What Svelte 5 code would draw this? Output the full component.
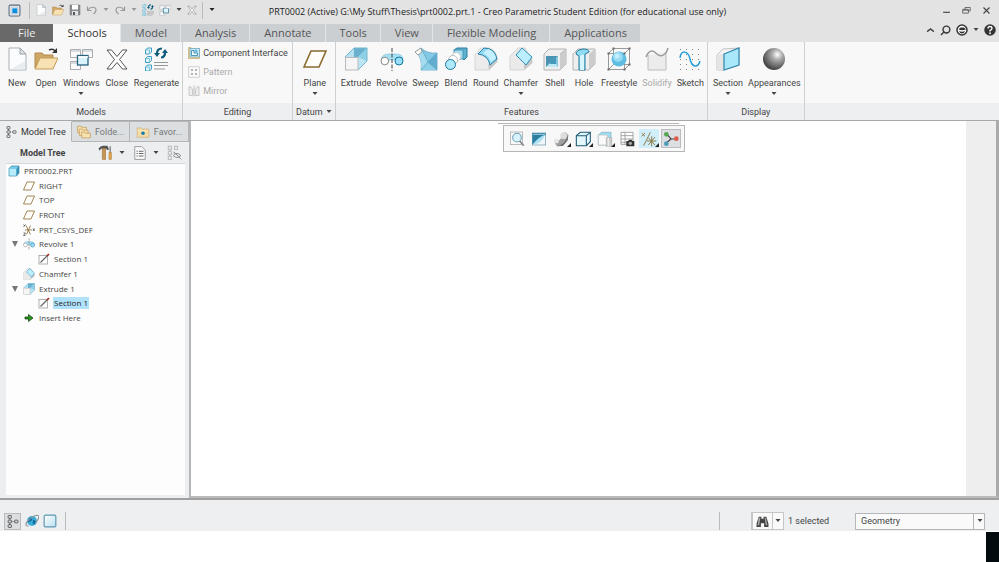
<script>
  const icons = {
    app: `<rect x="2" y="2" width="20" height="20" rx="2" fill="#fff" stroke="#54687a" stroke-width="2"/><rect x="5.5" y="5.5" width="13" height="13" fill="#e8f3fa" stroke="#8896a2"/><rect x="8" y="8" width="9" height="9" fill="#0a8fdc"/>`,
    doc: `<path d="M4 1h11l6 6v16H4z" fill="#fbfcfd" stroke="#aab0b6"/><path d="M15 1v6h6z" fill="#dde1e5" stroke="#9aa2a9"/><path d="M5 22.500h15V14z" fill="#e9edf1"/>`,
    open: `<path d="M1 21V6h7l2 2h9v4H7z" fill="#cfa768" stroke="#b18a4a"/><path d="M1 22l5-11h18l-5 11z" fill="#f8e2b4" stroke="#c39b58"/><path d="M15 3q4-2 6 1" fill="none" stroke="#333" stroke-width="1.500"/><path d="M23 1v5h-5z" fill="#333"/>`,
    save: `<path d="M2 2h20v20H2z" fill="#8a8c8f" stroke="#707275"/><path d="M6 2h12v9H6z" fill="#fff"/><path d="M6 14h12v8H6z" fill="#e2e4e6"/><path d="M8 16h4v6H8z" fill="#555"/>`,
    undo: `<path d="M3 5v8h8" fill="none" stroke="#999" stroke-width="2.400"/><path d="M4 12C9 4 21 5 20 13q-1 4-5 7" fill="none" stroke="#999" stroke-width="2.400"/>`,
    redo: `<path d="M21 5v8h-8" fill="none" stroke="#999" stroke-width="2.400"/><path d="M20 12C15 4 3 5 4 13q1 4 5 7" fill="none" stroke="#999" stroke-width="2.400"/>`,
    windows: `<path d="M1.500 2.500h10v8h-10zM13.500 2.500h10v8h-10zM1.500 14.500h10v8h-10z" fill="#fafafa" stroke="#a9adb1"/><path d="M2 4h10M14 4h9M2 16h9" stroke="#b9bdc1"/><rect x="8.500" y="8.500" width="10.500" height="9.500" fill="#d9f2fc" stroke="#27637f" stroke-width="1.300"/><path d="M9 10h10" stroke="#fff" stroke-width="1.500"/>`,
    close: `<path d="M2 3h4.500l5.500 6.500L17.500 3H22l-7.500 9.500L22 22h-4.500L12 15.500 6.500 22H2l7.500-9.500z" fill="#fff" stroke="#555"/>`,
    regen: `<g fill="#dff5fd" stroke="#2f93bd" stroke-width=".9"><path d="M1.500 3l2-2h4v4l-2 2h-4zM1.500 11.500l2-2h4v4l-2 2h-4zM1.500 20l2-2h4v4l-2 2h-4z"/></g><path d="M1.500 3h4v4M1.500 11.500h4v4M1.500 20h4v4" fill="none" stroke="#63b5d5" stroke-width=".8"/><path d="M18 1.500q-5 0-5 5" fill="none" stroke="#0e5d7c" stroke-width="2.200"/><path d="M10 6h6l-3 4zM17 10.500q5 0 5-5" fill="#0e5d7c"/><path d="M17 10.500q4 0 4-5" fill="none" stroke="#0e5d7c" stroke-width="2.200"/><path d="M18 6h6l-3-4z" fill="#0e5d7c"/><path d="M10 15.500h14M10 18.500h14M10 22h11" stroke="#96999c" stroke-width="1.200"/>`,
    comp: `<path d="M1 1h5v3h17v19H1z" fill="#ead6a2" stroke="#b49351"/><rect x="4" y="3" width="19" height="17" fill="#c8eafa" stroke="#3a88ad"/><path d="M7 17V7h5v5h7v5z" fill="#eefaff" stroke="#20799f" stroke-width="1.500"/><circle cx="16" cy="8" r="3" fill="#61b8dd"/>`,
    pattern: `<rect x="1.500" y="1.500" width="21" height="21" fill="#fafafa" stroke="#c4c4c4" stroke-width="1.500"/><path d="M6 6h4v4H6zM14 6h4v4h-4zM6 14h4v4H6zM14 14h4v4h-4z" fill="#b3b3b3"/>`,
    mirror: `<path d="M2 3q6 0 7 7v11H2zM22 3q-6 0-7 7v11h7z" fill="#eee" stroke="#bbb" stroke-width="1.500"/><path d="M12 1v22" stroke="#aaa" stroke-width="1.500"/>`,
    plane: `<path d="M8 4h15l-7 16H1z" fill="#fffefa" stroke="#8a6a2e" stroke-width="1.600"/>`,
    extrude: `<path d="M10 1h13v13l-9 9V10H1z" fill="#8ccbe2"/><path d="M1 10l9-9v9z" fill="#b5e1f0"/><path d="M10 1h13l-9 9h-4z" fill="#6ab1cf"/><path d="M14 10l9-9v13z" fill="#8fcfe6"/><path d="M14 10l9 4-9 9z" fill="#bde6f4"/><path d="M1 10l9-9h13v13l-9 9" fill="none" stroke="#75b5cf"/><rect x="1.500" y="10.500" width="12.500" height="12.500" fill="#f5f5f5" stroke="#b9b9b9"/>`,
    revolve: `<path d="M1 13Q2 7 8 7h8q7 0 7 6l-6 2q-5-5-10 0z" fill="#a5dff3" stroke="#8dc6da" stroke-width=".7"/><path d="M12 1v23" stroke="#444" stroke-dasharray="4 1.500"/><circle cx="4.800" cy="14" r="3.800" fill="#fff" stroke="#888"/><circle cx="19" cy="14" r="4" fill="#9adff8" stroke="#15759e"/>`,
    sweep: `<path d="M2 5l5-4q6 6 16 5v17H7Q9 12 2 5z" fill="#82c9e5" stroke="#6fb0ca" stroke-width=".9"/><path d="M2 5l5-4 7 14-7 8Q9 12 2 5z" fill="#a4dbef"/><path d="M14 15L23 6v17z" fill="#60add0"/><path d="M14 15l9 8H7z" fill="#8ccfe8"/><path d="M7 1l7 14 9-9M14 15l9 8M14 15l-7 8" stroke="#5ea0bc" stroke-width=".7" fill="none"/><path d="M1 5l6-4 1 4-4 3z" fill="#fff" stroke="#999"/>`,
    blend: `<path d="M10 3l3-2h10v9l-3 3z" fill="#5fb1d0" stroke="#2b7b9e"/><rect x="10" y="3" width="9" height="9" fill="#a5dff2" stroke="#4694b3"/><circle cx="12" cy="10" r="4.500" fill="#fff" stroke="#ccc"/><circle cx="9" cy="13" r="4.500" fill="#fff" stroke="#bbb"/><circle cx="6.500" cy="17.500" r="5" fill="#ade8fb" stroke="#20799f"/>`,
    round: `<path d="M1 8L7 1h8q7 2 8 10v4l-8 8H1z" fill="#ececec" stroke="#d5d5d5"/><path d="M14 18l9-8v5l-8 8z" fill="#c9c9c9"/><path d="M4 7l6-6q11 0 13 11l-7 6Q14 8 4 7z" fill="#8edaf5" stroke="#2a80a5"/><path d="M9 6l5-4q6 2 8 9l-5 4q-2-6-8-9z" fill="#c6f0fd"/>`,
    chamfer: `<path d="M1 9L9 1h7l7 12v3l-8 7H1z" fill="#eaeaea" stroke="#d5d5d5"/><path d="M15 17l8-6v5l-8 7z" fill="#c8c8c8"/><path d="M7 8l6-7 10 9-6 8z" fill="#bceffe" stroke="#2f8fb7"/>`,
    shell: `<path d="M1 7l5-5h17v15l-6 6H1z" fill="#eee" stroke="#b4b4b4"/><path d="M17 7l6-5v15l-6 6z" fill="#ccc"/><path d="M17 7l6-5" stroke="#bbb"/><rect x="3" y="9" width="12" height="11" fill="#bde8f6"/><path d="M3 9h12l-3 3H7zM3 9v11l4-4v-4z" fill="#4b93b1"/><rect x="7" y="11" width="6" height="6" fill="#479abb"/><path d="M13 17l2 3V9l-2 3z" fill="#85c6df"/>`,
    hole: `<path d="M1 7l5-5h17v15l-6 6H1z" fill="#eee" stroke="#b5b5b5"/><path d="M17 7l6-5v15l-6 6z" fill="#ccc"/><path d="M4 7q0-4 7-5 6 0 6 3l-4 2v16H7V9z" fill="#8edbf3" stroke="#25799d"/><path d="M8 9q2-2 4-1v15H8z" fill="#d8f6ff"/>`,
    freestyle: `<path d="M1.500 6.500h16v16h-16zM6.500 1.500h16v16h-16zM1.500 6.500l5-5M17.500 6.500l5-5M17.500 22.500l5-5M1.500 22.500l5-5" fill="none" stroke="#8f8f8f" stroke-width=".9"/><circle cx="12" cy="12" r="7.500" fill="#5fbde2"/><circle cx="11" cy="10" r="5" fill="#96dbf2"/><circle cx="10" cy="9" r="2.500" fill="#c3effc"/><path d="M.5 5.500h2v2h-2zM16.500 5.500h2v2h-2zM.5 21.500h2v2h-2zM16.500 21.500h2v2h-2zM5.500.5h2v2h-2zM21.500.5h2v2h-2zM21.500 16.500h2v2h-2z" fill="#686868"/>`,
    solidify: `<path d="M3 8v15h18V5" fill="#ececec" stroke="#bcbcbc"/><path d="M1 10C5 0 10 5 12 7c4 4 9 1 11-6" fill="none" stroke="#9c9c9c" stroke-width="1.500"/>`,
    sketch: `<g stroke="#858585" stroke-width="1" stroke-dasharray="1 5"><path d="M2 2.500h22M2 7.500h22M2 12.500h22M2 17.500h22M2 22.500h22"/></g><path d="M2 11C3 3 10 3 12 12s8 9 10 2" fill="none" stroke="#279fd7" stroke-width="1.500"/>`,
    section: `<path d="M1 8l6-6 16-1v17l-15 5H1z" fill="#f4f4f4" stroke="#c2c2c2"/><path d="M8 7v16H1V8z" fill="#e4e4e4"/><path d="M8 7l15-6v17L8 23z" fill="#a9e8fb" stroke="#2f86aa" stroke-width="1.200"/>`,
    sphere: `<defs><radialGradient id="ball" cx=".65" cy=".3" r=".7"><stop stop-color="#fff"/><stop offset=".35" stop-color="#aaa"/><stop offset="1" stop-color="#444"/></radialGradient></defs><circle cx="12" cy="12" r="11" fill="url(#ball)"/>`,
    zoomicon: `<rect x="2" y="1.500" width="18" height="19" fill="#fafafa" stroke="#9c9c9c"/><circle cx="12" cy="10" r="6.500" fill="#d8f3fd" stroke="#6d9fb7" stroke-width="1.600"/><path d="M16 15l6 7" stroke="#83898d" stroke-width="2.500"/>`,
    repaint: `<rect x="2" y="3" width="20" height="18" fill="#f1f6f8" stroke="#6a95a7"/><path d="M2 3h20v3Q14 8 3 20H2z" fill="#2b7e9f"/><path d="M3 20Q15 20 21 6 12 8 3 20z" fill="#a9e0f2"/><path d="M3 4h18v2H3z" fill="#83bfd6"/>`,
    shade: `<path d="M2 17q8-2 10-6l1-7 6-2 4 4-1 7-7 9-9 1z" fill="#a0a0a0"/><ellipse cx="5" cy="15" rx="4" ry="3.500" fill="#e4e4e4"/><circle cx="16" cy="7" r="5" fill="#ddd"/><path d="M23 6l-1 8-7 8-9 1q12-2 17-17z" fill="#666"/>`,
    cube: `<path d="M2 7l6-5h15v14l-6 6H2z" fill="#e3f7fd" stroke="#1d5b75" stroke-width="1.600"/><path d="M2 7h15v15M17 7l6-5" fill="none" stroke="#1d5b75" stroke-width="1.600"/>`,
    views: `<path d="M2 6l5-4h14v14l-5 5H2z" fill="#9fdff5" stroke="#79aabd"/><path d="M2 6h14v15H2z" fill="#fafafa" stroke="#bbb"/><path d="M14 10h8v13h-8z" fill="#d0d0d0" stroke="#aaa"/><path d="M17 10v13" stroke="#eee" stroke-width="2"/>`,
    camera: `<path d="M3 2h18v18H3zM3 7h18M3 12h18M3 17h18M9 2v18" fill="#fff" stroke="#999" stroke-width="1.300"/><path d="M11 15h3l1-2h4l1 2h3v8H11z" fill="#333"/><circle cx="17" cy="18.500" r="2.500" fill="#aaa"/>`,
    datum: `<path d="M1 3l5 5M6 3L1 8M14 2L4 22M16 8v15M9 15h14M11 10l10 11M21 9L11 21" stroke="#8b733c" stroke-width="1.400"/>`,
    axes: `<path d="M6 5l6 7h8M12 12l-7 6" fill="none" stroke="#444" stroke-width="1.800"/><circle cx="5" cy="5" r="3.500" fill="#55a752"/><circle cx="20" cy="11.500" r="3.500" fill="#df5a4c"/><circle cx="5" cy="19" r="3.500" fill="#4b9bb9"/>`,
    nodes: `<g fill="none" stroke="#555" stroke-width="1.700"><rect x="4" y="1" width="6" height="5" rx="1"/><rect x="4" y="9.500" width="6" height="5" rx="1"/><rect x="4" y="18" width="6" height="5" rx="1"/><rect x="16" y="9.500" width="6" height="5" rx="1"/><path d="M7 6v3M7 15v3M10 12h2M14 12h2"/></g>`,
    folders: `<g fill="#f8e2b4" stroke="#c49c56" stroke-width="1.300"><path d="M1 2h6l1 2h8v9H1z"/><path d="M4 7h6l1 2h8v9H4z"/><path d="M8 12h5l1 2h9v8H8z"/></g>`,
    fav: `<path d="M2 5h7l2 2h11v14H2z" fill="#f4dba6" stroke="#c6a263"/><path d="M3 10h18" stroke="#fff3d8"/><circle cx="12" cy="14" r="3" fill="#147ba6"/>`,
    tools: `<path d="M1 5q3-4 7-4h7l2 4v3h-2l-2-2H5L2 9z" fill="#555"/><path d="M7 6h5v17H7z" fill="#c99855" stroke="#9a6b2d"/><path d="M19.500 2v12" stroke="#777" stroke-width="2"/><path d="M17.500 12h4v11h-4z" fill="#dfa64f" stroke="#a9762f" stroke-width=".8"/>`,
    list: `<path d="M3 1h12l6 6v16H3z" fill="#fafafa" stroke="#8d9196" stroke-width="1.500"/><path d="M6 9h2M6 13h2M6 17h2M10 9h8M10 13h8M10 17h8" stroke="#666" stroke-width="1.800"/>`,
    treeoff: `<g fill="none" stroke="#b7b7b7" stroke-width="1.500"><rect x="2" y="2" width="5" height="5"/><rect x="2" y="10" width="5" height="5"/><rect x="2" y="18" width="5" height="5"/><rect x="12" y="2" width="5" height="5"/><path d="M5 7v3M5 15v3M9 13h4"/></g><path d="M10 17q6-7 12 0-6 6-12 0zM11 11l12 12" fill="none" stroke="#8a8a8a" stroke-width="1.500"/>`,
    part: `<path d="M2 7l5-5h15v14l-5 6H2z" fill="#79cdeb" stroke="#2780a4" stroke-width="1.300"/><path d="M3 8h13v13H3z" fill="#b8ecfb"/><path d="M17 8l5-6v14l-5 6z" fill="#368eb2"/>`,
    csys: `<path d="M6 3l9 18M15 3L7 21M4 12h14" stroke="#8b6d31" stroke-width="1.700"/><path d="M1 1l3 3M5 1L1 6M1 18h4l-4 5h4M20 9l3 5M23 9l-3 5" fill="none" stroke="#444" stroke-width="1.500"/>`,
    pencil: `<rect x="2" y="5" width="17" height="17" fill="#fff" stroke="#999" stroke-width="1.500"/><path d="M5 19L20 4" stroke="#666" stroke-width="2.500"/><path d="M18 6l4-4" stroke="#a8322d" stroke-width="3.500"/>`,
    arrow: `<path d="M4 10h7V5l9 7-9 7v-5H4z" fill="#24951b" stroke="#173d13" stroke-width="1.500"/>`,
    globe: `<circle cx="12" cy="12" r="8.500" fill="#3badd9"/><path d="M7 6l6 2-3 5-5 1zM14 10l5 2-3 6-3-2z" fill="#126b9e"/><path d="M6 21C-4 20 5 9 15 4s12 1 3 11" fill="none" stroke="#8a949b" stroke-width="2"/>`,
    pane: `<defs><linearGradient id="glass" x2="1" y2="1"><stop stop-color="#fff"/><stop offset="1" stop-color="#b9dfef"/></linearGradient></defs><rect x="2" y="2" width="20" height="20" rx="2" fill="url(#glass)" stroke="#5d97b0" stroke-width="2"/>`,
    find: `<path d="M5 3h5v4h4V3h5l4 13v6h-8v-7H9v7H1v-6z" fill="#444"/><path d="M5 5h3L6 19H3zM16 5h2l3 14h-3z" fill="#a9a9a9"/>`,
    search: `<circle cx="14" cy="10" r="7.500" fill="none" stroke="#333" stroke-width="3"/><path d="M9 15l-7 7" stroke="#333" stroke-width="3"/>`,
    smile: `<circle cx="12" cy="12" r="10" fill="#fff" stroke="#333" stroke-width="3"/><path d="M5 11l4-4h7l4 4q-8 3-15 0zM6 14q6 3 12 0-1 5-6 5t-6-5z" fill="#333"/>`,
    help: `<circle cx="12" cy="12" r="11.500" fill="#333"/><path d="M8 9q0-4 4-4t4 4q0 2-4 4v2" fill="none" stroke="#fff" stroke-width="2.800"/><circle cx="12" cy="18.500" r="1.800" fill="#fff"/>`,
    up: `<path d="M3 15l9-7 9 7" fill="none" stroke="#444" stroke-width="4"/>`,
    min: `<path d="M3 17h18" stroke="#555" stroke-width="3.500"/>`,
    restore: `<path d="M8 9V4h14v9h-5M2 9h15v10H2zM2 11h15" fill="none" stroke="#555" stroke-width="2.200"/>`,
    x: `<path d="M4 4l16 16M20 4L4 20" stroke="#444" stroke-width="3"/>`
  };

  const quick = [
    ["doc", "New"], ["open", "Open"], ["save", "Save"], ["undo", "Undo", "dim"], ["redo", "Redo", "dim"],
    ["regen", "Regenerate"], ["windows", "Windows", "dark"], ["close", "Close"]
  ];
  const tabs = ["File", "Schools", "Model", "Analysis", "Annotate", "Tools", "View", "Flexible Modeling", "Applications"];
  const models = [["New", "doc"], ["Open", "open"], ["Windows", "windows", true], ["Close", "close"], ["Regenerate", "regen"]];
  const features = [
    ["Extrude", "extrude"], ["Revolve", "revolve"], ["Sweep", "sweep"], ["Blend", "blend"], ["Round", "round"],
    ["Chamfer", "chamfer", true], ["Shell", "shell"], ["Hole", "hole"], ["Freestyle", "freestyle"],
    ["Solidify", "solidify", false, true], ["Sketch", "sketch"]
  ];
  const display = [["Section", "section", true], ["Appearances", "sphere", true]];
  const view = [
    ["zoomicon", "Refit"], ["repaint", "Repaint"], ["shade", "Rendering", true], ["cube", "Display style", true],
    ["views", "Saved orientations", true], ["camera", "View manager"], ["datum", "Datum display", true, "lit"], ["axes", "Spin center", false, "down"]
  ];
  const tree = [
    ["PRT0002.PRT", "part", 0], ["RIGHT", "plane", 1], ["TOP", "plane", 1], ["FRONT", "plane", 1],
    ["PRT_CSYS_DEF", "csys", 1], ["Revolve 1", "revolve", 1, true], ["Section 1", "pencil", 2],
    ["Chamfer 1", "chamfer", 1], ["Extrude 1", "extrude", 1, true], ["Section 1", "pencil", 2, false, true],
    ["Insert Here", "arrow", 1]
  ];
</script>

{#snippet icon(name, size)}
  <svg viewBox="0 0 24 24" width={size} height={size} aria-hidden="true">{@html icons[name]}</svg>
{/snippet}

{#snippet caret()}
  <svg class="caret" viewBox="0 0 6 4" width="6" height="4" aria-hidden="true"><path d="M.5 0h5L3 3z" fill="currentColor" /></svg>
{/snippet}

{#snippet tool([label, name, menu, off])}
  <button class="tool" disabled={off}>
    {@render icon(name, 24)}
    <span>{label}</span>
    {#if menu}{@render caret()}{/if}
  </button>
{/snippet}

<div class="app">
  <header class="title">
    <div class="quick">
      <button class="logo" aria-label="Application menu">{@render icon("app", 13)}</button>
      {#each quick as [name, label, drop]}
        <button aria-label={label}>{@render icon(name, name === "close" ? 10 : 12)}</button>
        {#if drop}<button class="drop {drop}" aria-label="{label} list">{@render caret()}</button>{/if}
      {/each}
      <button class="more" aria-label="Customize toolbar">{@render caret()}</button>
    </div>
    <h1>PRT0002 (Active) G:\My Stuff\Thesis\prt0002.prt.1 - Creo Parametric Student Edition (for educational use only)</h1>
    <div class="win">
      <button aria-label="Minimize">{@render icon("min", 9)}</button>
      <button aria-label="Restore">{@render icon("restore", 9)}</button>
      <button aria-label="Close window">{@render icon("x", 9)}</button>
    </div>
  </header>

  <nav class="tabs">
    {#each tabs as t}
      <button class:file={t === "File"} class:current={t === "Schools"}>{t}</button>
    {/each}
    <div class="aid">
      <button aria-label="Collapse ribbon">{@render icon("up", 9)}</button>
      <button aria-label="Search">{@render icon("search", 11)}</button>
      <button aria-label="Learning">{@render icon("smile", 12)}</button>
      <button class="drop" aria-label="Learning list">{@render caret()}</button>
      <button aria-label="Help">{@render icon("help", 12)}</button>
    </div>
  </nav>

  <div class="ribbon">
    <section>
      <div class="set">{#each models as m}{@render tool(m)}{/each}</div>
      <h2>Models</h2>
    </section>
    <section>
      <div class="set rows">
        <button>{@render icon("comp", 12)}Component Interface</button>
        <button disabled>{@render icon("pattern", 12)}Pattern</button>
        <button disabled>{@render icon("mirror", 12)}Mirror</button>
      </div>
      <h2>Editing</h2>
    </section>
    <section class="datum">
      <div class="set">{@render tool(["Plane", "plane", true])}</div>
      <h2>Datum {@render caret()}</h2>
    </section>
    <section>
      <div class="set">{#each features as f}{@render tool(f)}{/each}</div>
      <h2>Features</h2>
    </section>
    <section>
      <div class="set">{#each display as d}{@render tool(d)}{/each}</div>
      <h2>Display</h2>
    </section>
    <section class="rest"><div class="set"></div><h2></h2></section>
  </div>

  <div class="work">
    <aside>
      <div class="panes">
        <button class="on">{@render icon("nodes", 12)}Model Tree</button>
        <button>{@render icon("folders", 14)}Folde...</button>
        <button>{@render icon("fav", 14)}Favor...</button>
      </div>
      <div class="head">
        <h3>Model Tree</h3>
        <button aria-label="Settings">{@render icon("tools", 15)}{@render caret()}</button>
        <button aria-label="Show">{@render icon("list", 14)}{@render caret()}</button>
        <button aria-label="Hide tree">{@render icon("treeoff", 15)}</button>
      </div>
      <div class="sheet">
        <ul>
          {#each tree as [label, name, level, parent, picked]}
            <li class="level{level}">
              {#if parent}<button class="twist" aria-label="Collapse {label}"><svg viewBox="0 0 6 6" width="6" height="6"><path d="M0 0h6L3 6z" fill="#777" /></svg></button>{/if}
              {@render icon(name, 12)}
              <span class:picked>{label}</span>
            </li>
          {/each}
        </ul>
      </div>
    </aside>
    <main>
      <div class="canvas">
        <div class="dock">
          <div class="viewbar">
            {#each view as [name, label, menu, state]}
              <button class={state} aria-label={label}>{@render icon(name, 16)}{#if menu}<i></i>{/if}</button>
            {/each}
          </div>
        </div>
      </div>
    </main>
  </div>

  <footer>
    <button class="pressed" aria-label="Toggle model tree">{@render icon("nodes", 13)}</button>
    <button aria-label="Toggle browser">{@render icon("globe", 14)}</button>
    <button aria-label="Full screen">{@render icon("pane", 14)}</button>
    <span class="rule"></span>
    <span class="rule push"></span>
    <div class="find">
      <button aria-label="Find">{@render icon("find", 13)}</button>
      <button aria-label="Find list">{@render caret()}</button>
    </div>
    <output>1 selected</output>
    <label class="filter">
      <select aria-label="Selection filter"><option>Geometry</option></select>
      <span>{@render caret()}</span>
    </label>
  </footer>
  <div class="corner"></div>
</div>

<style>
  :global(body) { margin: 0; background: #fff; }
  .app {
    font-family: Roboto, "Open Sans", sans-serif;
    font-size: 9px;
    line-height: 12px;
    color: #444;
    min-height: 100vh;
    display: flex;
    flex-direction: column;
  }
  .app * { box-sizing: border-box; }
  button {
    font: inherit;
    color: inherit;
    background: none;
    border: 0;
    padding: 0;
    margin: 0;
    display: flex;
    align-items: center;
    justify-content: center;
    flex: none;
    white-space: nowrap;
  }
  svg { display: block; flex: none; }
  h1, h2, h3, ul { margin: 0; padding: 0; font-size: inherit; font-weight: 400; }

  .title {
    display: grid;
    grid-template-columns: 1fr auto 1fr;
    align-items: center;
    height: 23px;
    background: #e3e3e3;
  }
  .title h1 { font-family: "Open Sans", sans-serif; color: #222; white-space: nowrap; margin-right: 4px; }
  .quick { display: flex; align-items: center; gap: 5px; height: 20px; align-self: start; }
  .quick .logo { padding: 0 8px; border-right: 1px solid #bbb; height: 17px; }
  .quick .more { border-left: 1px solid #bbb; height: 17px; padding-left: 6px; color: #222; }
  .quick .dim { color: #999; }
  .win { display: flex; justify-content: flex-end; gap: 11px; padding-right: 8px; height: 20px; align-self: start; }

  .tabs { display: flex; align-items: flex-start; gap: 1px; height: 19px; background: #e3e3e3; }
  .tabs > button { font-family: "Open Sans", sans-serif; height: 18px; margin-top: 1px; padding: 0 13px 0 14px; font-size: 11px; background: #cccfd2; color: #555; }
  .tabs > .file { background: #696969; color: #eee; padding: 0 18px; margin-right: -1px; }
  .tabs > .current { background: #f8f8f8; color: #333; }
  .aid { margin-left: auto; display: flex; align-items: center; gap: 5px; height: 14px; padding-right: 3px; }

  .ribbon { display: flex; height: 79px; background: #f8f8f8; border-bottom: 1px solid #a8a8a8; }
  section { display: flex; flex-direction: column; flex: none; border-right: 1px solid #cdd0d3; }
  .set { flex: 1; display: flex; align-items: flex-start; padding: 5px 1px 0 2px; }
  .tool { flex-direction: column; justify-content: flex-start; min-width: 29px; padding: 0 2px 0 3px; }
  .tool svg:first-child { margin: 0 -2px; }
  .tool span { margin-top: 6px; }
  .tool .caret { margin-top: 3px; }
  button:disabled { color: #aaa; }
  .rows { flex-direction: column; gap: 7px; padding: 5px 4px 0 5px; }
  .rows button { gap: 3px; }
  h2 { height: 17px; display: flex; align-items: center; justify-content: center; gap: 3px; background: #edeff1; }
  .rest { flex: 1; border: 0; }
  .datum { width: 43px; }
  .datum .set { justify-content: center; }

  .work { flex: 1; display: flex; min-height: 0; border-bottom: 2px solid #a0a0a0; }
  aside { flex: none; width: 191px; display: flex; flex-direction: column; background: #eceef0; border-right: 2px solid #b4b8bb; }
  .panes { display: flex; height: 21px; }
  .panes button { flex: 1 0 58px; gap: 4px; background: #dcdfe1; border: solid #b4b6b8; border-width: 1px 1px 1px 0; color: #777; }
  .panes .on { flex-basis: 71px; background: none; border-color: transparent #b4b6b8 transparent; color: #333; }
  .head { display: flex; align-items: center; gap: 8px; height: 21px; padding: 0 7px 0 20px; }
  .head h3 { font-weight: 700; margin-right: auto; }
  .head button { gap: 6px; }
  .sheet { flex: 1; margin: 0 4px 3px 6px; background: #fdfdfd; border-top: 1px solid #d5d8da; }
  ul {
    list-style: none;
    display: grid;
    align-content: space-between;
    min-height: 161px;
    font-family: "Open Sans", sans-serif;
    font-size: 8px;
  }
  li { display: flex; align-items: center; gap: 4px; height: 14px; padding-left: 2px; position: relative; }
  .level1 { padding-left: 17px; }
  .level2 { padding-left: 32px; gap: 3px; }
  .twist { position: absolute; left: 6px; top: 4px; }
  .level2 span { padding: 0 1px; }
  .picked { background: #b0e2fb; color: #222; }

  main { flex: 1; display: flex; padding-right: 30px; background: #eee; border-right: 3px solid #aaa; border-bottom: 2px solid #bbb; }
  .canvas { flex: 1; background: #fff; display: flex; justify-content: center; align-items: flex-start; padding: 2px 0 0 26px; }
  .dock::before { content: ""; display: block; height: 1px; margin: 0 6px 1px 0; background: #b6b6b6; }
  .viewbar { display: flex; gap: 2px; height: 27px; margin-left: 5px; padding: 3px; background: #f8f8f8; border: 1px solid #b6b6b6; }
  .viewbar button { width: 20px; position: relative; }
  .viewbar .lit { background: #d0effb; }
  .viewbar .down { background: #dcdee1; border: 1px solid #b9bcc0; }
  .viewbar i { position: absolute; right: 0; bottom: 1px; border: 2px solid; border-color: transparent #222 #222 transparent; }

  footer { display: flex; align-items: center; gap: 4px; height: 31px; padding: 11px 14px 0 4px; background: #edeff1; }
  footer .pressed { width: 17px; height: 17px; background: #dcdee0; border: 1px solid #b9bbbd; }
  .rule { width: 1px; height: 18px; background: #bbb; margin-left: 4px; }
  .push { margin-left: auto; margin-right: 27px; }
  .find { display: flex; height: 18px; border: 1px solid #c4c6c8; border-left-width: 2px; background: #fafafa; }
  .find button { width: 19px; }
  .find button + button { width: 11px; border-left: 1px solid #c4c6c8; }
  footer output { width: 63px; }
  .filter { display: flex; position: relative; width: 130px; }
  select { flex: 1; appearance: none; font: inherit; color: inherit; height: 17px; padding: 0 5px; background: #fafafa; border: 1px solid #b4b6b8; border-radius: 0; }
  .filter span { position: absolute; right: 0; top: 0; width: 12px; height: 17px; display: grid; place-items: center; border-left: 1px solid #b4b6b8; pointer-events: none; }
  .corner { align-self: flex-end; width: 13px; height: 30px; margin-top: 1px; background: #030b0e; }
</style>
